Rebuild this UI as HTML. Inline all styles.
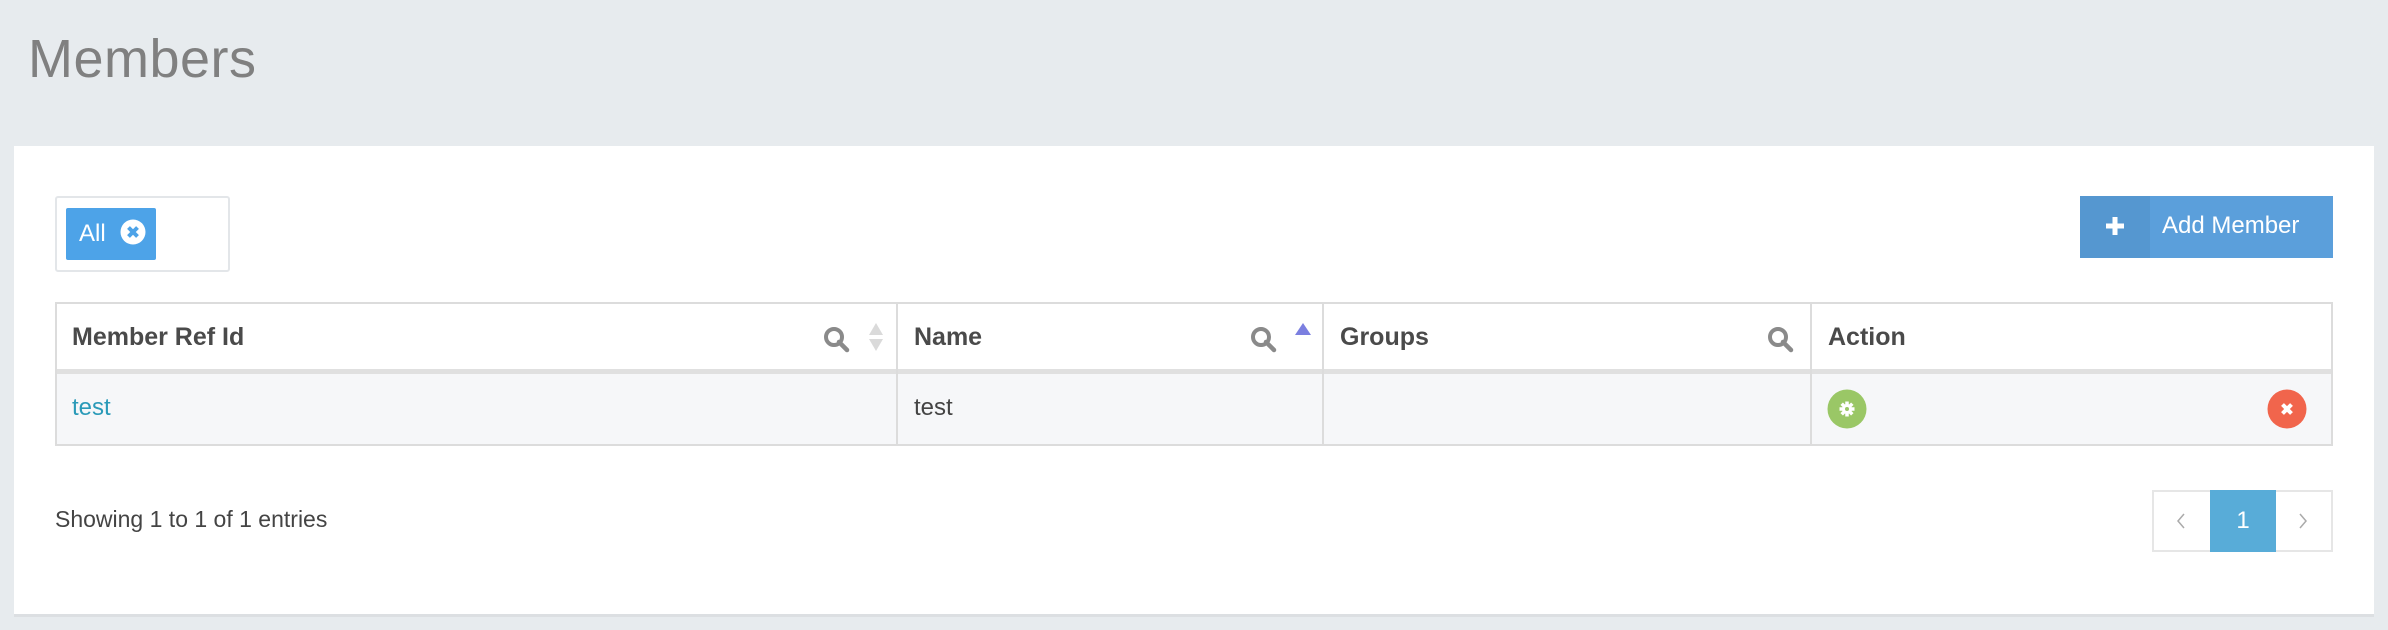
<!DOCTYPE html>
<html><head><meta charset="utf-8"><style>
*{margin:0;padding:0;box-sizing:border-box}
body{width:2388px;height:630px;background:#e7ebee;font-family:"Liberation Sans",sans-serif;position:relative;overflow:hidden;color:#444}
.abs{position:absolute}
h1{position:absolute;left:28px;top:28px;font-size:54px;font-weight:normal;color:#808080;letter-spacing:0.5px}
.card{left:14px;top:146px;width:2360px;height:468px;background:#fff;box-shadow:0 3px 0 #dcdfe2}
.th{font-size:25px;color:#4a4a4a;font-weight:bold;top:323px}
.td{font-size:24px;top:394px}
</style></head><body>
<h1>Members</h1>
<div class="abs card"></div>
<div class="abs" style="left:55px;top:196px;width:175px;height:76px;border:2px solid #e3e6e9;border-radius:3px"></div>
<div class="abs" style="left:66px;top:208px;width:90px;height:52px;background:#4da3e8;border-radius:2px;color:#fff;font-size:24px;line-height:52px;padding-left:13px">All</div>
<svg class="abs" style="left:120px;top:219px" width="26" height="26" viewBox="0 0 26 26"><circle cx="13" cy="13" r="12.5" fill="#fff"/><path d="M8.5 8.5l9 9M17.5 8.5l-9 9" stroke="#4da3e8" stroke-width="4"/></svg>
<div class="abs" style="left:2080px;top:196px;width:253px;height:62px;background:#5b9fdb"></div>
<div class="abs" style="left:2080px;top:196px;width:70px;height:62px;background:#5597d0"></div>
<svg class="abs" style="left:2105px;top:216px" width="20" height="20"><path d="M10 1v18M1 10h18" stroke="#fff" stroke-width="5"/></svg>
<div class="abs" style="left:2162px;top:212px;color:#fff;font-size:24px">Add Member</div>
<div class="abs" style="left:55px;top:302px;width:2278px;height:144px;border:2px solid #dcdcdc;background:#fff"></div>
<div class="abs" style="left:57px;top:374px;width:2274px;height:70px;background:#f6f7f9"></div>
<div class="abs" style="left:57px;top:369px;width:2274px;height:5px;background:#e0e0e0"></div>
<div class="abs" style="left:896px;top:304px;width:2px;height:140px;background:#dcdcdc"></div>
<div class="abs" style="left:1322px;top:304px;width:2px;height:140px;background:#dcdcdc"></div>
<div class="abs" style="left:1810px;top:304px;width:2px;height:140px;background:#dcdcdc"></div>
<div class="abs th" style="left:72px">Member Ref Id</div>
<div class="abs th" style="left:914px">Name</div>
<div class="abs th" style="left:1340px">Groups</div>
<div class="abs th" style="left:1828px">Action</div>
<svg class="abs" style="left:823px;top:326px" width="28" height="28"><circle cx="11" cy="11" r="8" fill="none" stroke="#8a8a8a" stroke-width="4"/><path d="M16 16l8 8" stroke="#8a8a8a" stroke-width="4.5" stroke-linecap="round"/></svg>
<svg class="abs" style="left:867px;top:322px" width="18" height="30"><path d="M2 13L9 1l7 12z M2 17l7 12 7-12z" fill="#dadada"/></svg>
<svg class="abs" style="left:1250px;top:326px" width="28" height="28"><circle cx="11" cy="11" r="8" fill="none" stroke="#8a8a8a" stroke-width="4"/><path d="M16 16l8 8" stroke="#8a8a8a" stroke-width="4.5" stroke-linecap="round"/></svg>
<svg class="abs" style="left:1294px;top:322px" width="18" height="14"><path d="M1 13L9 1l8 12z" fill="#7b7fe0"/></svg>
<svg class="abs" style="left:1767px;top:326px" width="28" height="28"><circle cx="11" cy="11" r="8" fill="none" stroke="#8a8a8a" stroke-width="4"/><path d="M16 16l8 8" stroke="#8a8a8a" stroke-width="4.5" stroke-linecap="round"/></svg>
<div class="abs td" style="left:72px;color:#2a9ab8">test</div>
<div class="abs td" style="left:914px;color:#444">test</div>
<svg class="abs" style="left:1827px;top:389px" width="40" height="40"><circle cx="20" cy="20" r="19.5" fill="#9ac766"/><path d="M20 12.5v15M12.5 20h15M14.7 14.7l10.6 10.6M25.3 14.7L14.7 25.3" stroke="#fff" stroke-width="3.5"/><circle cx="20" cy="20" r="5" fill="#fff"/><circle cx="20" cy="20" r="2" fill="#9ac766"/></svg>
<svg class="abs" style="left:2267px;top:389px" width="40" height="40"><circle cx="20" cy="20" r="19.5" fill="#f1654c"/><path d="M15.5 15.5l9 9M24.5 15.5l-9 9" stroke="#fff" stroke-width="4"/></svg>
<div class="abs" style="left:55px;top:506px;font-size:23px;color:#444">Showing 1 to 1 of 1 entries</div>
<div class="abs" style="left:2152px;top:490px;width:181px;height:62px;border:2px solid #e6e6e6;background:#fff"></div>
<div class="abs" style="left:2210px;top:490px;width:66px;height:62px;background:#58acd8;color:#fff;font-size:24px;text-align:center;line-height:62px">1</div>
<svg class="abs" style="left:2176px;top:512px" width="10" height="18"><path d="M8 2L2 9l6 7" fill="none" stroke="#aaa" stroke-width="1.5"/></svg>
<svg class="abs" style="left:2298px;top:512px" width="10" height="18"><path d="M2 2l6 7-6 7" fill="none" stroke="#aaa" stroke-width="1.5"/></svg>
</body></html>
